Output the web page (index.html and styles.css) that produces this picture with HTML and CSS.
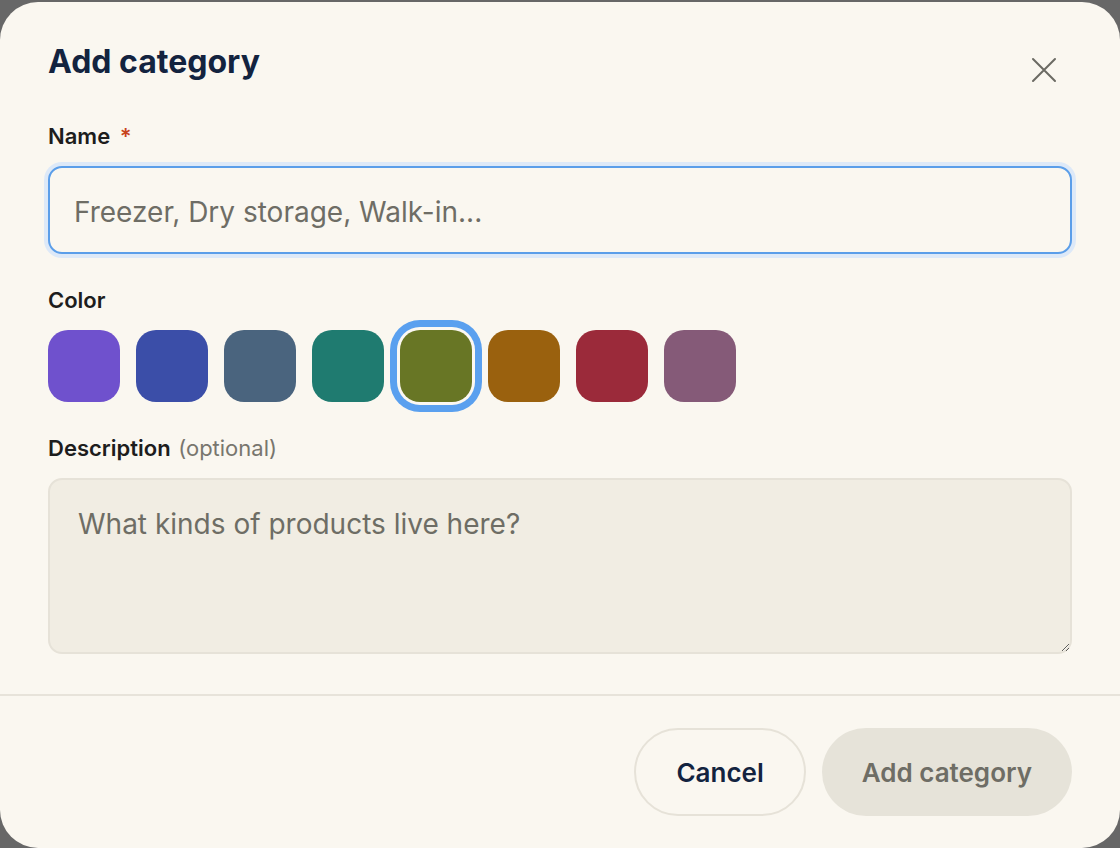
FILE: index.html
```html
<!DOCTYPE html>
<html lang="en">
<head>
<meta charset="utf-8">
<title>Add category</title>
<link rel="stylesheet" href="styles.css">
</head>
<body>
<div class="modal" role="dialog" aria-labelledby="dlg-title">
  <div class="modal-body">
    <div class="modal-header">
      <h2 class="modal-title" id="dlg-title">Add category</h2>
      <button class="close-btn" type="button" aria-label="Close">
        <svg width="26" height="26" viewBox="0 0 26 26" fill="none" stroke="currentColor" stroke-width="2" stroke-linecap="round"><path d="M2 2L24 24M24 2L2 24"/></svg>
      </button>
    </div>

    <div class="field">
      <label class="label" for="name">Name <span class="req">*</span></label>
      <input class="input" id="name" type="text" placeholder="Freezer, Dry storage, Walk-in...">
    </div>

    <div class="field">
      <div class="label">Color</div>
      <div class="swatches">
        <span class="swatch sw-purple"></span>
        <span class="swatch sw-blue"></span>
        <span class="swatch sw-slate"></span>
        <span class="swatch sw-teal"></span>
        <span class="swatch sw-olive selected"></span>
        <span class="swatch sw-amber"></span>
        <span class="swatch sw-red"></span>
        <span class="swatch sw-mauve"></span>
      </div>
    </div>

    <div class="field">
      <label class="label" for="desc">Description <span class="optional">(optional)</span></label>
      <textarea class="textarea" id="desc" placeholder="What kinds of products live here?"></textarea>
    </div>
  </div>

  <div class="modal-footer">
    <button class="btn btn-secondary" type="button">Cancel</button>
    <button class="btn btn-primary" type="button" disabled>Add category</button>
  </div>
</div>
</body>
</html>
```

FILE: styles.css
```css
* { box-sizing: border-box; }

html, body {
  margin: 0;
  height: 100%;
}

body {
  background: #676767;
  font-family: Inter, "Noto Sans", sans-serif;
  padding-top: 2px;
  overflow: hidden;
}

.modal {
  background: #faf7f0;
  border-radius: 38px;
  height: 846px;
  display: flex;
  flex-direction: column;
}

.modal-body {
  padding: 40px 48px 40px;
  display: flex;
  flex-direction: column;
  gap: 32px;
  border-bottom: 2px solid #e7e3da;
}

.modal-header {
  display: flex;
  justify-content: space-between;
  align-items: flex-start;
  height: 40px;
  margin-bottom: 8px;
}

.modal-title {
  margin: 0;
  font-size: 32px;
  line-height: 40px;
  font-weight: 700;
  color: #13233f;
}

.close-btn {
  width: 48px;
  height: 48px;
  margin-top: 4px;
  margin-right: 4px;
  border: 0;
  background: transparent;
  color: #6b6a63;
  display: flex;
  align-items: center;
  justify-content: center;
  padding: 0;
  cursor: pointer;
  flex-shrink: 0;
}

.field {
  display: flex;
  flex-direction: column;
  gap: 16px;
}

.label {
  font-size: 22px;
  line-height: 28px;
  font-weight: 600;
  color: #1d1d1d;
}

.req {
  color: #c8431d;
  margin-left: 4px;
}

.optional {
  font-weight: 400;
  color: #78766e;
  margin-left: 2px;
}

.input {
  height: 88px;
  width: 100%;
  border: 2px solid #5b9ee9;
  border-radius: 14px;
  background: #faf7f0;
  box-shadow: 0 0 0 4px #dde9f8;
  padding: 4px 24px 0;
  font-family: inherit;
  font-size: 28px;
  color: #1d1d1d;
  outline: none;
}

.input::placeholder,
.textarea::placeholder {
  color: #6e6d65;
  opacity: 1;
}

.swatches {
  display: flex;
  gap: 16px;
}

.swatch {
  width: 72px;
  height: 72px;
  border-radius: 20px;
  display: block;
}

.swatch.selected {
  box-shadow: 0 0 0 3px #fbf8f2, 0 0 0 10px #5aa0ef;
}

.sw-purple { background: #6f51cd; }
.sw-blue { background: #3b4ea8; }
.sw-slate { background: #4a647e; }
.sw-teal { background: #1f7b70; }
.sw-olive { background: #687625; }
.sw-amber { background: #9a610e; }
.sw-red { background: #9b2a3a; }
.sw-mauve { background: #855a78; }

.textarea {
  height: 176px;
  width: 100%;
  border: 2px solid #e6e2d8;
  border-radius: 14px;
  background: #f1ede3;
  padding: 26px 28px 22px;
  font-family: inherit;
  font-size: 28px;
  line-height: 36px;
  color: #1d1d1d;
  resize: vertical;
  outline: none;
}

.modal-footer {
  padding: 32px 48px;
  display: flex;
  justify-content: flex-end;
  gap: 16px;
}

.btn {
  height: 88px;
  border-radius: 44px;
  font-family: inherit;
  font-size: 26px;
  font-weight: 600;
  padding: 0 40px;
  cursor: pointer;
}

.btn-secondary {
  background: #faf7f0;
  border: 2px solid #e6e2d8;
  color: #13233f;
}

.btn-primary {
  background: #e6e3d9;
  border: 0;
  color: #6e6d65;
}
```
